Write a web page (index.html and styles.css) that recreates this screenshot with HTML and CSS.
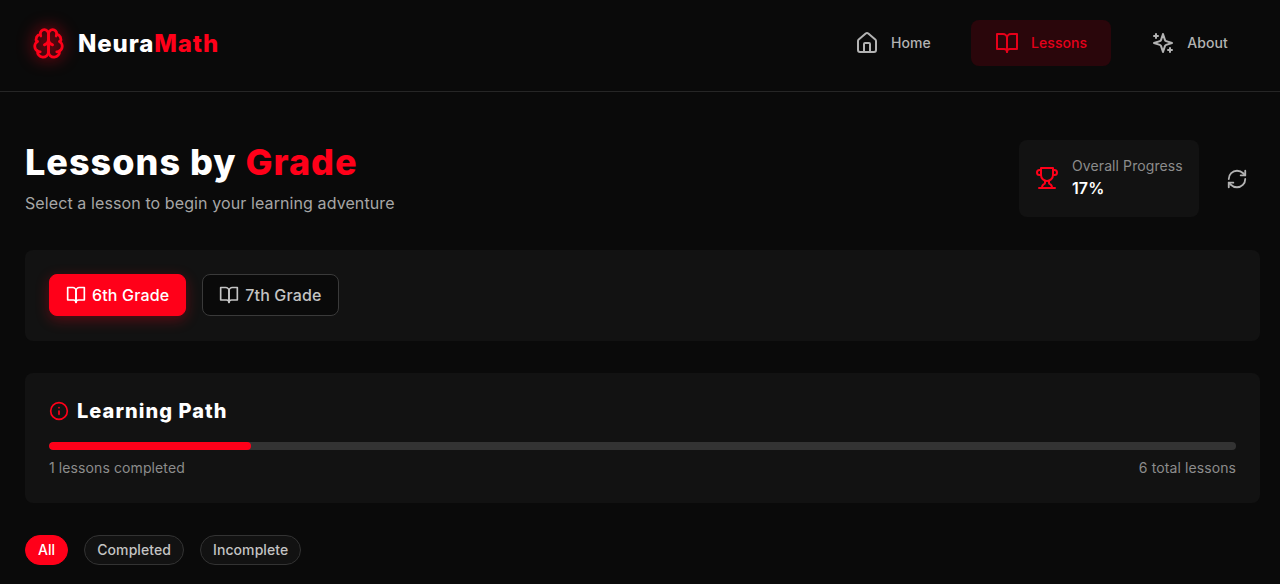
FILE: index.html
```html
<!DOCTYPE html>
<html lang="en">
<head>
  <meta charset="UTF-8">
  <title>NeuraMath - Lessons</title>
  <meta name="viewport" content="width=device-width, initial-scale=1.0">
  <link rel="stylesheet" href="styles.css">
</head>
<body>

<svg class="icon-defs" width="0" height="0">
  <symbol id="i-book" viewBox="0 0 24 24"><path d="M2 3h6a4 4 0 0 1 4 4v14a3 3 0 0 0-3-3H2z"/><path d="M22 3h-6a4 4 0 0 0-4 4v14a3 3 0 0 1 3-3h7z"/></symbol>
</svg>

<header class="topbar">
  <a class="logo" href="#">
    <svg class="icon logo-icon" viewBox="0 0 24 24"><path d="M12 5a3 3 0 1 0-5.997.125 4 4 0 0 0-2.526 5.77 4 4 0 0 0 .556 6.588A4 4 0 1 0 12 18Z"/><path d="M12 5a3 3 0 1 1 5.997.125 4 4 0 0 1 2.526 5.77 4 4 0 0 1-.556 6.588A4 4 0 1 1 12 18Z"/><path d="M15 13a4.5 4.5 0 0 1-3-4 4.5 4.5 0 0 1-3 4"/><path d="M17.599 6.5a3 3 0 0 0 .399-1.375"/><path d="M6.003 5.125A3 3 0 0 0 6.401 6.5"/><path d="M3.477 10.896a4 4 0 0 1 .585-.396"/><path d="M19.938 10.5a4 4 0 0 1 .585.396"/><path d="M6 18a4 4 0 0 1-1.967-.516"/><path d="M19.967 17.484A4 4 0 0 1 18 18"/></svg>
    <span class="logo-text">Neura<em>Math</em></span>
  </a>
  <nav class="nav">
    <a class="nav-item" href="#">
      <svg class="icon" viewBox="0 0 24 24"><path d="M15 21v-8a1 1 0 0 0-1-1h-4a1 1 0 0 0-1 1v8"/><path d="M3 10a2 2 0 0 1 .709-1.528l7-5.999a2 2 0 0 1 2.582 0l7 5.999A2 2 0 0 1 21 10v9a2 2 0 0 1-2 2H5a2 2 0 0 1-2-2z"/></svg>
      Home
    </a>
    <a class="nav-item active" href="#">
      <svg class="icon"><use href="#i-book"/></svg>
      Lessons
    </a>
    <a class="nav-item" href="#">
      <svg class="icon" viewBox="0 0 24 24"><path d="m12 3-1.912 5.813a2 2 0 0 1-1.275 1.275L3 12l5.813 1.912a2 2 0 0 1 1.275 1.275L12 21l1.912-5.813a2 2 0 0 1 1.275-1.275L21 12l-5.813-1.912a2 2 0 0 1-1.275-1.275L12 3Z"/><path d="M5 3v4"/><path d="M19 17v4"/><path d="M3 5h4"/><path d="M17 19h4"/></svg>
      About
    </a>
  </nav>
</header>

<main class="page">
  <section class="page-head">
    <div>
      <h1>Lessons by <em>Grade</em></h1>
      <p class="subtitle">Select a lesson to begin your learning adventure</p>
    </div>
    <div class="head-right">
      <div class="overall">
        <svg class="icon trophy" viewBox="0 0 24 24"><path d="M6 9H4.5a2.5 2.5 0 0 1 0-5H6"/><path d="M18 9h1.5a2.5 2.5 0 0 0 0-5H18"/><path d="M4 22h16"/><path d="M10 14.66V17c0 .55-.47.98-.97 1.21C7.85 18.75 7 20.24 7 22"/><path d="M14 14.66V17c0 .55.47.98.97 1.21C16.15 18.75 17 20.24 17 22"/><path d="M18 2H6v7a6 6 0 0 0 12 0V2Z"/></svg>
        <div>
          <div class="overall-label">Overall Progress</div>
          <div class="overall-value">17%</div>
        </div>
      </div>
      <button class="refresh">
        <svg class="icon" viewBox="0 0 24 24"><path d="M3 12a9 9 0 0 1 9-9 9.75 9.75 0 0 1 6.74 2.74L21 8"/><path d="M21 3v5h-5"/><path d="M21 12a9 9 0 0 1-9 9 9.75 9.75 0 0 1-6.74-2.74L3 16"/><path d="M8 16H3v5"/></svg>
      </button>
    </div>
  </section>

  <section class="card grades">
    <button class="grade-btn selected"><svg class="icon"><use href="#i-book"/></svg>6th Grade</button>
    <button class="grade-btn"><svg class="icon"><use href="#i-book"/></svg>7th Grade</button>
  </section>

  <section class="card path">
    <h2>
      <svg class="icon" viewBox="0 0 24 24"><circle cx="12" cy="12" r="10"/><path d="M12 16v-4"/><path d="M12 8h.01"/></svg>
      Learning Path
    </h2>
    <div class="bar"><div class="bar-fill" style="width: 17%"></div></div>
    <div class="bar-labels">
      <span>1 lessons completed</span>
      <span>6 total lessons</span>
    </div>
  </section>

  <div class="filters">
    <button class="pill selected">All</button>
    <button class="pill">Completed</button>
    <button class="pill">Incomplete</button>
  </div>
</main>

</body>
</html>
```

FILE: styles.css
```css
* {
  box-sizing: border-box;
}

body {
  margin: 0;
  background: #0a0a0a;
  color: #fff;
  font-family: 'Inter', sans-serif;
  letter-spacing: 0.1px;
}

a {
  text-decoration: none;
  color: inherit;
}

button {
  font-family: inherit;
  letter-spacing: inherit;
  cursor: pointer;
}

em {
  font-style: normal;
  color: #ff0019;
}

.icon-defs {
  position: absolute;
}

.icon {
  width: 24px;
  height: 24px;
  fill: none;
  stroke: currentColor;
  stroke-width: 2;
  stroke-linecap: round;
  stroke-linejoin: round;
  flex-shrink: 0;
}

.topbar {
  height: 92px;
  border-bottom: 1px solid #262626;
  display: flex;
  align-items: flex-start;
  justify-content: space-between;
  padding: 20px 28px 0 32px;
}

.logo {
  display: flex;
  align-items: center;
  gap: 13px;
  height: 46px;
}

.logo-icon {
  width: 33px;
  height: 33px;
  color: #ff0019;
  filter: drop-shadow(0 0 8px rgba(255, 0, 25, 0.85));
}

.logo-text {
  font-size: 24px;
  font-weight: 800;
  letter-spacing: 0.9px;
}

.nav {
  display: flex;
  gap: 16px;
}

.nav-item {
  display: flex;
  align-items: center;
  gap: 12px;
  height: 46px;
  padding: 0 24px 1px;
  border-radius: 8px;
  font-size: 14px;
  font-weight: 500;
  color: #b3b3b3;
}

.nav-item.active {
  background: #2a060b;
  color: #e6001a;
}

.page {
  padding: 48px 20px 0 25px;
}

.page-head {
  display: flex;
  justify-content: space-between;
  align-items: center;
  margin-bottom: 33px;
}

h1 {
  margin: -2px 0 0;
  font-size: 36px;
  line-height: 44px;
  font-weight: 800;
  letter-spacing: 1px;
}

.subtitle {
  margin: 7px 0 0;
  font-size: 16px;
  line-height: 24px;
  color: #a6a6a6;
}

.head-right {
  display: flex;
  align-items: center;
  gap: 20px;
  padding-right: 5px;
}

.overall {
  display: flex;
  align-items: center;
  gap: 13px;
  width: 180px;
  height: 77px;
  padding: 0 16px 2px;
  background: #121212;
  border-radius: 8px;
}

.trophy {
  color: #ff0019;
}

.overall-label {
  font-size: 14px;
  line-height: 20px;
  color: #8c8c8c;
}

.overall-value {
  font-size: 16px;
  line-height: 24px;
  font-weight: 600;
}

.refresh {
  width: 36px;
  height: 36px;
  padding: 7px;
  background: none;
  border: 0;
  color: #b3b3b3;
  display: flex;
}

.refresh .icon {
  width: 22px;
  height: 22px;
}

.card {
  background: #121212;
  border-radius: 8px;
  padding: 24px;
}

.grades {
  display: flex;
  gap: 16px;
  height: 91px;
  margin-bottom: 32px;
}

.grade-btn {
  display: flex;
  align-items: center;
  gap: 6px;
  height: 42px;
  padding: 0 16px;
  border-radius: 8px;
  border: 1px solid #3a3a3a;
  background: #0a0a0a;
  color: #c4c4c4;
  font-size: 16px;
  font-weight: 500;
  letter-spacing: 0.15px;
}

.grade-btn .icon {
  width: 20px;
  height: 20px;
}

.grade-btn.selected {
  background: #ff0019;
  border-color: #ff0019;
  color: #fff;
  box-shadow: 0 4px 14px rgba(255, 0, 25, 0.3);
}

.path {
  height: 130px;
  margin-bottom: 32px;
}

h2 {
  display: flex;
  align-items: center;
  gap: 8px;
  margin: 0 0 17px;
  font-size: 20px;
  line-height: 28px;
  font-weight: 800;
  letter-spacing: 1.05px;
}

h2 .icon {
  width: 20px;
  height: 20px;
  color: #ff0019;
}

.bar {
  height: 8px;
  background: #333;
  border-radius: 4px;
  overflow: hidden;
}

.bar-fill {
  height: 100%;
  background: #ff0019;
  border-radius: 4px;
}

.bar-labels {
  display: flex;
  justify-content: space-between;
  margin-top: 8px;
  font-size: 14px;
  line-height: 20px;
  color: #8c8c8c;
}

.filters {
  display: flex;
  gap: 16px;
}

.pill {
  height: 30px;
  padding: 0 12px 2px;
  border-radius: 15px;
  border: 1px solid #333;
  background: #121212;
  color: #c4c4c4;
  font-size: 14px;
  font-weight: 500;
  letter-spacing: 0.08px;
}

.pill.selected {
  background: #ff0019;
  border-color: #ff0019;
  color: #fff;
}
```
